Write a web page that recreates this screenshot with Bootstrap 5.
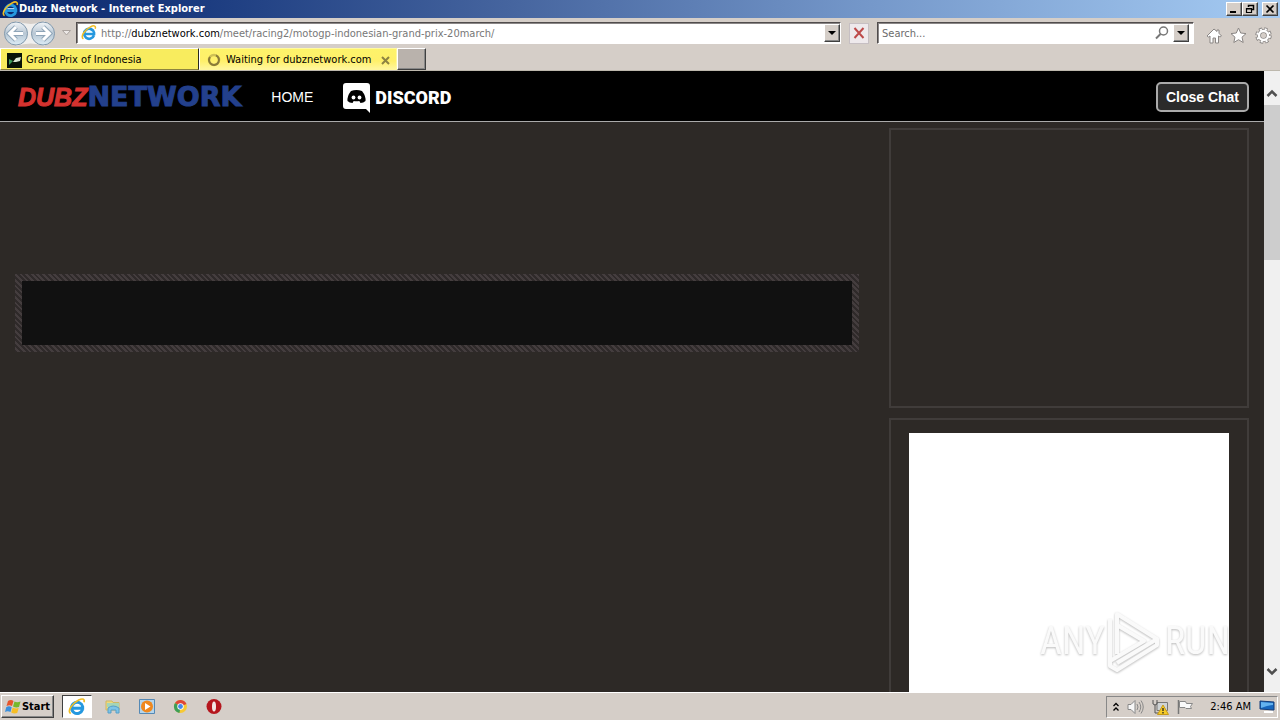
<!DOCTYPE html>
<html lang="en">
<head>
<meta charset="utf-8">
<meta name="viewport" content="width=device-width, initial-scale=1">
<title>Dubz Network</title>
<link href="https://cdn.jsdelivr.net/npm/bootstrap@5.3.0/dist/css/bootstrap.min.css" rel="stylesheet">
<style>
:root{--chrome:#d5cec8;--page:#2d2926;--line:#403c3a}
body{font-family:Tahoma,"DejaVu Sans Condensed","DejaVu Sans",sans-serif;font-size:11px;line-height:14px;color:#000;background:var(--chrome)}
button,input{font:inherit;border-radius:0}
svg{display:block;flex:none}
.plain{background:none;border:0;padding:0}
.titlebar{height:18px;background:linear-gradient(90deg,#0b266b 0%,#1c3c80 16%,#46659f 40%,#7598ca 68%,#a5cbf3 100%);padding:0 2px}
.titlebar h1{font-size:11px;line-height:18px;font-weight:700;color:#fff}
.bevel{background:var(--chrome);border:1px solid;border-color:#fff #404040 #404040 #fff;box-shadow:inset -1px -1px #888;padding:0;display:flex;align-items:center;justify-content:center}
.caption-btn{width:16px;height:14px}
.toolbar{height:30px}
.field{height:22px;background:#fff;border:1px solid;border-color:#504c4c #fff #fff #504c4c;box-shadow:inset 1px 1px #8a8686}
.address-text{color:#777;padding-top:2px;white-space:nowrap}
.address-text b{font-weight:400;color:#000}
.field input{border:0;outline:0;background:none;min-width:0;padding:2px 0 0}
.field input::placeholder{color:#6c6c6c;opacity:1}
.drop{width:16px;height:18px}
.search-field{width:317px}
.stop{width:20px;height:21px;background:#eee9ec;border:1px solid #c6bfc3;padding:0;display:flex;align-items:center;justify-content:center}
.tabs{height:23px;border-bottom:1px solid #bdb8ad}
.tab{width:199px;height:22px;background:#f8ec5e;border:1px solid;border-color:#fff #2a2a20 #8c843e #fff;padding:2px 6px 0}
.tab.current{width:198px;background:linear-gradient(#fdf36a,#fff06a 60%,#fff69c);border-color:#fff9a0 #fff9a0 #fff69c #fff}
.newtab{width:29px;height:22px;background:#b9b2ac}
.site{background:var(--page);font-family:"Liberation Sans",Arial,sans-serif}
.sitenav{height:51px;background:#000;border-bottom:1px solid #aaa;padding:1px 15px 0 18px}
.menu{gap:30px}
.logo{font-size:25px;line-height:30px;font-weight:700;color:#23408c;text-decoration:none}
.logo .net{font-family:"DejaVu Sans",sans-serif;font-size:27px;line-height:26px;-webkit-text-stroke:1px #23408c}
.logo em{color:#d4322f;-webkit-text-stroke:1px #d4322f}
.home{font-size:14px;line-height:20px;color:#fff;text-decoration:none}
.discord{font:900 18px/20px Roboto,sans-serif;color:#fff;text-decoration:none;padding-top:2px}
.chat-btn{font-size:14px;line-height:20px;font-weight:700;color:#fff;background:#2b2b2b;border:2px solid #aaa;border-radius:5px;padding:3px 8px}
.columns{gap:30px;padding:6px 15px 0}
.stage{border:7px solid transparent;height:78px;margin-top:146px;background:linear-gradient(#111,#111) padding-box,repeating-linear-gradient(45deg,#2f2a2a 0 2px,#443d3e 2px 4px) border-box}
.aside-col{width:360px;gap:10px}
.panel{border:2px solid var(--line)}
.panel-a{height:280px}
.panel-b{border-bottom:0;padding:13px 18px 0}
.ad{background:#fff}
.vscroll{width:16px;background:#f0f0f0}
.thumb{height:155px;background:#cdcdcd}
.watermark{position:absolute;right:50px;bottom:20px;color:#fafafa;font:400 38px/50px "Roboto Condensed","Liberation Sans Narrow",sans-serif;filter:drop-shadow(0 1px 1px #bbb)}
.taskbar{height:28px;border-top:1px solid #fff;padding:2px 2px 2px 1px}
.start{width:53px;height:23px;font-weight:700}
.task-active{width:30px;height:23px;background:#fff;border:1px solid;border-color:#404040 #fff #fff #404040;display:flex;align-items:center;justify-content:center}
.quick{gap:18px;margin-left:13px}
.tray{height:22px;border:1px solid;border-color:#888 #fff #fff #888;padding:0 1px 0 6px}
</style>
</head>
<body class="vh-100 d-flex flex-column overflow-hidden">
<svg class="d-none" aria-hidden="true">
  <symbol id="ie" viewBox="0 0 16 16">
    <path d="M12.900 10.300A5 5 0 1 1 13 7.600L13 9H4.300" fill="none" stroke="#2598df" stroke-width="2.700"/>
    <path d="M5 7.200h6.500" stroke="#c6edff" stroke-width="1"/>
    <path d="M2.400 13.800C-1 12 3.500 4.800 9.500 1.800c4-2 5.500-.5 4.700 2" fill="none" stroke="#f0bd24" stroke-width="1.500"/>
  </symbol>
  <symbol id="tri" viewBox="0 0 8 4"><path d="M0 0h8L4 4z"/></symbol>
</svg>

<header>
  <div class="titlebar d-flex align-items-center">
    <svg width="17" height="17"><use href="#ie"/></svg>
    <h1 class="m-0 flex-grow-1">Dubz Network - Internet Explorer</h1>
    <button class="bevel caption-btn" aria-label="Minimize"><svg width="10" height="10"><path d="M1 8h6" stroke="#000" stroke-width="2"/></svg></button>
    <button class="bevel caption-btn" aria-label="Restore"><svg width="10" height="10"><path d="M3.500 3V1.500h5v4H7M3 1.500h6" fill="none" stroke="#000" stroke-width="1.500"/><path d="M1.500 4.500h5v4h-5zM1 5h6" fill="none" stroke="#000" stroke-width="1.200"/></svg></button>
    <button class="bevel caption-btn ms-1" aria-label="Close"><svg width="10" height="10"><path d="M1.500 1.500l7 7m0-7l-7 7" stroke="#000" stroke-width="1.700"/></svg></button>
  </div>

  <div class="toolbar d-flex align-items-center">
    <button class="plain ms-1" aria-label="Back and forward">
      <svg width="54" height="27" viewBox="0 0 54 27">
        <defs><linearGradient id="ball" x2="0" y2="1"><stop stop-color="#f2f5f8"/><stop offset=".5" stop-color="#b8c7d4"/><stop offset="1" stop-color="#dcecf5"/></linearGradient></defs>
        <path d="M12 1q15 6 29 0v25q-14-5-29 0z" fill="#f0efee"/>
        <g fill="url(#ball)" stroke="#8198ac"><circle cx="12" cy="13.500" r="11.500"/><circle cx="39" cy="13.500" r="11.500"/></g>
        <g fill="none" stroke="#8fa5b8" stroke-width="5"><path d="M5 13.500h14M12 7l-6.500 6.500L12 20M32 13.500h14M39 7l6.500 6.500L39 20"/></g>
        <g fill="none" stroke="#fff" stroke-width="3"><path d="M5 13.500h14M12 7l-6.500 6.500L12 20M32 13.500h14M39 7l6.500 6.500L39 20"/></g>
      </svg>
    </button>
    <button class="plain ms-1" aria-label="Recent pages"><svg width="10" height="6"><path d="M.5.500h8L4.500 5z" fill="#ece8e6" stroke="#aaa39f"/></svg></button>
    <div class="field d-flex align-items-center flex-grow-1 ms-1 ps-1">
      <svg width="16" height="16"><use href="#ie"/></svg>
      <div class="address-text flex-grow-1 ms-1">http://<b>dubznetwork.com</b>/meet/racing2/motogp-indonesian-grand-prix-20march/</div>
      <button class="bevel drop" aria-label="Show addresses"><svg width="8" height="4"><use href="#tri"/></svg></button>
    </div>
    <button class="stop ms-2 me-2" aria-label="Stop"><svg width="12" height="12"><path d="M1.500 1l9 10m0-10l-9 10" stroke="#bd4a4a" stroke-width="2"/></svg></button>
    <div class="field search-field d-flex align-items-center ps-1">
      <input class="flex-grow-1" type="text" placeholder="Search..." aria-label="Search">
      <button class="plain me-1" aria-label="Go"><svg width="14" height="14"><circle cx="8.500" cy="5" r="4" fill="none" stroke="#777" stroke-width="1.500"/><path d="M5.500 8L1 12.500" stroke="#777" stroke-width="2"/></svg></button>
      <button class="bevel drop me-1" aria-label="Search options"><svg width="8" height="4"><use href="#tri"/></svg></button>
    </div>
    <div class="d-flex gap-2 ms-2 me-2 ps-1 pt-1">
      <button class="plain" aria-label="Home"><svg width="16" height="17"><path d="M8 2L1 9l1.500 1L4 9v7h3v-5h2.500v5h3V9l1.500 1L15.500 9l-2.500-2.700V3h-2v1.500z" fill="#fff" stroke="#8a8684"/></svg></button>
      <button class="plain" aria-label="Favorites"><svg width="17" height="17"><path d="M8.500 1l2.200 5 5.300.6-4 3.600 1.200 5.300-4.700-2.800-4.700 2.800L5 10.200 1 6.600 6.300 6z" fill="#fff" stroke="#8a8684"/></svg></button>
      <button class="plain" aria-label="Tools"><svg width="17" height="17" viewBox="0 0 17 17"><circle cx="8.500" cy="8.500" r="6.500" fill="none" stroke="#8a8684" stroke-width="3.500" stroke-dasharray="3.100 2"/><circle cx="8.500" cy="8.500" r="4.500" fill="none" stroke="#8a8684" stroke-width="4"/><circle cx="8.500" cy="8.500" r="6.300" fill="none" stroke="#fff" stroke-width="2" stroke-dasharray="2 2.950" stroke-dashoffset="-.5"/><circle cx="8.500" cy="8.500" r="4.500" fill="none" stroke="#fff" stroke-width="2.400"/><circle cx="8.500" cy="8.500" r="2.300" fill="#d5cec8"/></svg></button>
    </div>
  </div>

  <nav class="tabs d-flex" aria-label="Browser tabs">
    <button class="tab d-flex align-items-center text-start">
      <svg width="15" height="15"><path d="M0 0h15v15H0z" fill="#071208"/><path d="M2 6l4 2-4 4z" fill="#3c9b59"/><path d="M6 9l3-4 5-1-1 4-4 1z" fill="#dce8d7"/></svg>
      <span class="ms-1">Grand Prix of Indonesia</span>
    </button>
    <div class="tab current d-flex align-items-center">
      <svg width="16" height="14"><circle cx="8" cy="7" r="5" fill="none" stroke="#cfc055" stroke-width="2.500"/><path d="M10 2.400A5 5 0 1 1 4 4" fill="none" stroke="#8a7b38" stroke-width="2"/></svg>
      <span class="flex-grow-1 ms-1">Waiting for dubznetwork.com</span>
      <button class="plain" aria-label="Close tab"><svg width="9" height="9"><path d="M1 1l7 7m0-7L1 8" stroke="#8d8442" stroke-width="2"/></svg></button>
    </div>
    <button class="bevel newtab" aria-label="New tab"></button>
  </nav>
</header>

<div class="site d-flex flex-grow-1 overflow-hidden position-relative">
  <div class="flex-grow-1 d-flex flex-column">
    <nav class="sitenav d-flex align-items-center">
      <div class="menu d-flex align-items-center">
        <a class="logo d-flex align-items-center" href="#"><em>DUBZ</em><span class="net">NETWORK</span></a>
        <a class="home" href="#">HOME</a>
        <a class="discord d-flex align-items-center gap-1" href="#">
          <svg width="28" height="30" viewBox="0 0 28 30"><path d="M3 0h21q3 0 3 3v27l-4-4H3q-3 0-3-3V3q0-3 3-3z" fill="#fff"/><path d="M8 8q5.500-2 11 0 4 5 3.500 10-2 2-5 2l-1.200-2q-3 .6-5.600 0l-1.200 2q-3 0-5-2Q4 13 8 8z" fill="#000"/><circle cx="10.500" cy="14.500" r="1.900" fill="#fff"/><circle cx="16.500" cy="14.500" r="1.900" fill="#fff"/></svg>
          <span>DISCORD</span>
        </a>
      </div>
      <button class="chat-btn ms-auto">Close Chat</button>
    </nav>
    <div class="columns d-flex flex-grow-1">
      <main class="flex-grow-1"><div class="stage"></div></main>
      <aside class="aside-col d-flex flex-column">
        <section class="panel panel-a" aria-label="Chat"></section>
        <section class="panel panel-b flex-grow-1 d-flex"><div class="ad flex-grow-1"></div></section>
      </aside>
    </div>
  </div>
  <div class="vscroll d-flex flex-column align-items-center" aria-hidden="true">
    <svg width="16" height="34"><path d="M3.500 25L8 20.500l4.500 4.500" fill="none" stroke="#505050" stroke-width="2.500"/></svg>
    <div class="thumb w-100"></div>
    <svg class="mt-auto" width="16" height="34"><path d="M3.500 11L8 15.500l4.500-4.500" fill="none" stroke="#505050" stroke-width="2.500"/></svg>
  </div>
  <div class="watermark d-flex align-items-center">
    <span>ANY</span>
    <svg width="60" height="62" viewBox="6 0 60 62" fill="none" stroke="#fafafa" stroke-width="4" stroke-linejoin="round"><path d="M18 44V4l40 25-40 24M18 15l27 16-34 20V9M11 51v5l7 4 40-25v-6"/></svg>
    <span>RUN</span>
  </div>
</div>

<footer class="taskbar d-flex align-items-center">
  <button class="bevel start"><svg width="17" height="16" viewBox="0 0 17 16"><path d="M3 2q3-2 5.500 0L7 7Q4.500 5.500 1.500 7z" fill="#e6552b"/><path d="M9.500 2.500Q12 4 15.500 2.500L14 8q-3 1-6-.5z" fill="#76b82c"/><path d="M1.200 8.200Q4 6.500 6.700 8.200L5.500 13q-3-1.500-5.500 0z" fill="#3a8fdc"/><path d="M7.700 8.500q3 1.500 6 .5l-1.500 5q-3 1-6-.5z" fill="#f6be25"/></svg><span>Start</span></button>
  <div class="d-flex align-items-center ms-2">
    <button class="task-active" aria-label="Internet Explorer"><svg width="18" height="18"><use href="#ie"/></svg></button>
    <div class="quick d-flex">
      <button class="plain" aria-label="Explorer"><svg width="16" height="17"><path d="M1 3h6l1 1.500h6V12H1z" fill="#f0da7c" stroke="#cdb765"/><path d="M2 5h12v4H2z" fill="#a5d5b8"/><path d="M3 15v-5q5-4 11 0v5h-3v-3H6v3z" fill="#7cc4e8" stroke="#569fc8"/></svg></button>
      <button class="plain" aria-label="Media Player"><svg width="16" height="17"><path d="M.5 1.500h15v14H.5z" fill="#b4d5ec" stroke="#5589b5"/><circle cx="8" cy="8.500" r="6" fill="#ef881e"/><path d="M6 5l5.500 3.500L6 12z" fill="#fff"/></svg></button>
      <button class="plain" aria-label="Chrome"><svg width="15" height="17" viewBox="0 0 15 17"><circle cx="7.500" cy="8.500" r="6.500" fill="#f7c933"/><path d="M7.500 8.500L2 5a6.500 6.500 0 0 1 11.500 1z" fill="#de4637"/><path d="M7.500 8.500L2 5a6.500 6.500 0 0 0 4.500 10z" fill="#3c9e58"/><circle cx="7.500" cy="8.500" r="3.200" fill="#fff"/><circle cx="7.500" cy="8.500" r="2.400" fill="#4688ea"/></svg></button>
      <button class="plain" aria-label="Opera"><svg width="16" height="17"><circle cx="8" cy="8.500" r="7.500" fill="#b5161d"/><ellipse cx="8" cy="8.500" rx="2" ry="5" fill="#f3e6e4"/></svg></button>
    </div>
  </div>
  <div class="tray d-flex align-items-center gap-2 ms-auto">
    <svg width="6" height="10"><path d="M.5 4L3 1.500 5.500 4M.5 8.500L3 6l2.500 2.500" fill="none" stroke="#000" stroke-width="1.300"/></svg>
    <svg width="17" height="16"><path d="M1 5.500h3L8 1.500v13L4 10.500H1z" fill="#f7f7f7" stroke="#888"/><path d="M10 5q2 3 0 6M12 3q3.500 5 0 10M14 1.500q4.500 6.500 0 13" fill="none" stroke="#888"/></svg>
    <svg width="17" height="16"><path d="M5 3.500h10.500v8H5z" fill="#cfd3d5" stroke="#777"/><path d="M1 1v4q2 2 4 0V1M3 6v8h4" fill="none" stroke="#555"/><path d="M11 6l5.500 9.500h-11z" fill="#f5cb28" stroke="#c79a18"/><path d="M11 9v3m0 1v1.500" stroke="#222" stroke-width="1.300"/></svg>
    <svg width="17" height="16"><path d="M1.500 1v14" stroke="#777" stroke-width="1.500"/><path d="M2.500 2.500h6l1 2h6l-2 3 1 2H9l-1-1H2.500z" fill="#fafafa" stroke="#888"/></svg>
    <time class="ms-2">2:46 AM</time>
    <svg width="17" height="16"><path d="M1 2l14 1v8L1 10z" fill="#1766bd" stroke="#143c78"/><path d="M2 3l12 1v2q-5 0-12 3z" fill="#64b2ef"/><path d="M5 13h9" stroke="#fff" stroke-width="2"/></svg>
  </div>
</footer>
<script src="https://cdn.jsdelivr.net/npm/bootstrap@5.3.0/dist/js/bootstrap.bundle.min.js"></script>
</body>
</html>
